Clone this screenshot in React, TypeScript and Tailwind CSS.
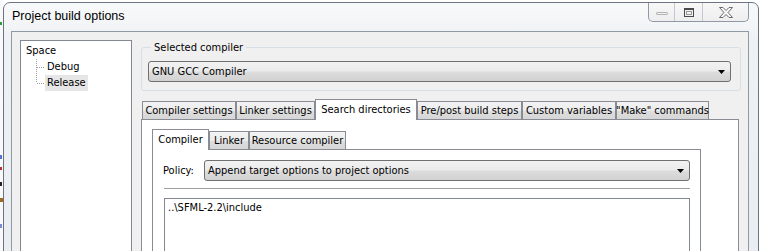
import React from 'react';

interface TabDef {
  label: string;
  width: string;
  active?: boolean;
}

const outerTabs: TabDef[] = [
  { label: 'Compiler settings', width: 'w-[94px]' },
  { label: 'Linker settings', width: 'w-[79px]' },
  { label: 'Search directories', width: 'w-[102px]', active: true },
  { label: 'Pre/post build steps', width: 'w-[105px]' },
  { label: 'Custom variables', width: 'w-[94px]' },
  { label: '"Make" commands', width: 'w-[93px]' },
];

const innerTabs: TabDef[] = [
  { label: 'Compiler', width: 'w-[57px]', active: true },
  { label: 'Linker', width: 'w-[40px]' },
  { label: 'Resource compiler', width: 'w-[97px]' },
];

// win7 style push-button gradient
const buttonBg =
  'bg-[linear-gradient(to_bottom,#f2f2f2_0%,#ebebeb_48%,#dddddd_52%,#d1d1d1_100%)]';

function Tab({ tab }: { tab: TabDef }) {
  if (tab.active) {
    return (
      <div
        className={`${tab.width} relative z-10 -mb-px flex h-[21px] items-start justify-center whitespace-nowrap border border-b-0 border-[#898c95] bg-white pt-[3px] leading-[13px]`}
      >
        {tab.label}
      </div>
    );
  }
  return (
    <div
      className={`${tab.width} flex h-[18px] items-center justify-center whitespace-nowrap border border-b-0 border-[#898c95] bg-[linear-gradient(to_bottom,#f3f3f3_0%,#ebebeb_50%,#dedede_51%,#d6d6d6_100%)] leading-[13px]`}
    >
      {tab.label}
    </div>
  );
}

function Combo({ text, className }: { text: string; className: string }) {
  return (
    <div
      className={`${className} ${buttonBg} flex h-[21px] items-center justify-between rounded-[3px] border border-[#707070] pl-[3px] pr-[5px] leading-[13px]`}
    >
      <span className="whitespace-nowrap">{text}</span>
      <svg width="7" height="4" viewBox="0 0 7 4">
        <path d="M0 0h7L3.5 4z" fill="#000" />
      </svg>
    </div>
  );
}

function TreeConnector({ last }: { last?: boolean }) {
  return (
    <svg width="10" height="16" viewBox="0 0 10 16" shapeRendering="crispEdges" className="shrink-0">
      <line
        x1="0.5"
        y1="0"
        x2="0.5"
        y2={last ? 8 : 16}
        stroke="#a0a0a0"
        strokeDasharray="1 1"
      />
      <line x1="1" y1="8.5" x2="9" y2="8.5" stroke="#a0a0a0" strokeDasharray="1 1" />
    </svg>
  );
}

function CaptionButtons() {
  return (
    <div className="mr-[9px] flex h-[19px] rounded-b-[5px] border border-t-0 border-[#8e99a5] bg-[linear-gradient(to_bottom,#f7f7f7,#eeeeee)]">
      <div className="flex w-[26px] items-center justify-center border-r border-[#c2c9d0]">
        <div className="mt-[3px] h-[3px] w-[12px] rounded-[1px] border border-[#b4b4b4]" />
      </div>
      <div className="flex w-[28px] items-center justify-center border-r border-[#c2c9d0]">
        <div className="h-[9px] w-[10px] border border-t-2 border-[#4a4a4a] p-[1px]">
          <div className="h-full w-full border border-[#9a9a9a]" />
        </div>
      </div>
      <div className="flex w-[45px] items-center justify-center">
        <svg width="14" height="11" viewBox="0 0 14 11">
          <path
            d="M0.5 0.5h3.5l3 3 3-3h3.5l-4.5 5 4.5 5h-3.5l-3-3-3 3h-3.5l4.5-5z"
            fill="#fafafa"
            stroke="#6a6a6a"
            strokeWidth="1"
            strokeLinejoin="round"
          />
        </svg>
      </div>
    </div>
  );
}

export default function App() {
  return (
    <div className="flex h-[251px] w-[761px] overflow-hidden bg-white font-['DejaVu_Sans_Condensed','Liberation_Sans',Arial,sans-serif] text-[11px] text-black">
      {/* bits of the window behind */}
      <div className="flex w-[3px] shrink-0 flex-col bg-[#f7f9fb]">
        <div className="mt-[22px] h-[3px] w-[2px] bg-[#2f9c3a]" />
        <div className="mt-[130px] h-[4px] w-[2px] bg-[#5a6fd0]" />
        <div className="mt-[8px] h-[3px] w-[2px] bg-[#c03030]" />
        <div className="mt-[12px] h-[4px] w-[2px] bg-[#222]" />
        <div className="mt-[12px] h-[4px] w-[3px] bg-[#a06a20]" />
        <div className="mt-[22px] h-[4px] w-[2px] bg-[#7a8ad8]" />
      </div>

      <div className="mt-[2px] flex h-[260px] w-[756px] shrink-0 flex-col rounded-t-[7px] border border-[#6b7580] bg-[linear-gradient(to_bottom,#f8f9fa,#eef1f4_40px,#e9edf1)]">
        {/* title bar */}
        <div className="flex h-[28px] shrink-0 items-start justify-between">
          <div className="pl-[8px] pt-[6px] font-['Liberation_Sans',Arial,sans-serif] text-[12.5px] leading-[14px] text-black">
            Project build options
          </div>
          <CaptionButtons />
        </div>

        {/* client area */}
        <div className="ml-[7px] mr-[9px] flex flex-1 border border-[#8f9aa5] bg-[#f0f0f0]">
          {/* tree */}
          <div className="ml-[8px] mt-[8px] w-[112px] shrink-0 border border-[#828790] bg-white pl-[5px] pt-[2px] leading-[16px]">
            <div className="h-[16px]">Space</div>
            <div className="flex h-[16px] pl-[10px]">
              <TreeConnector />
              <span className="pl-[1px]">Debug</span>
            </div>
            <div className="flex h-[16px] pl-[10px]">
              <TreeConnector last />
              <span className="-ml-[1px] bg-[#e6e6e6] px-[2px]">Release</span>
            </div>
          </div>

          {/* right side */}
          <div className="ml-[9px] flex w-[600px] shrink-0 flex-col">
            <fieldset className="mt-[7px] rounded-[3px] border border-[#d5dfe5] pb-[8px] pl-[6px] pr-[9px] pt-[6px]">
              <legend className="ml-[3px] px-[3px] pt-[2px] leading-[14px]">Selected compiler</legend>
              <Combo text="GNU GCC Compiler" className="w-full" />
            </fieldset>

            <div className="mt-[8px] flex h-[20px] items-end pl-[1px]">
              {outerTabs.map((t) => (
                <Tab key={t.label} tab={t} />
              ))}
            </div>
            <div className="w-[598px] flex-1 border border-[#898c95] bg-white pl-[10px] pt-[9px]">
              <div className="flex h-[20px] items-end">
                {innerTabs.map((t) => (
                  <Tab key={t.label} tab={t} />
                ))}
              </div>
              <div className="h-[200px] w-[549px] border border-[#898c95] bg-white px-[10px] pt-[10px]">
                <div className="flex items-center">
                  <span className="w-[41px] leading-[13px]">Policy:</span>
                  <Combo text="Append target options to project options" className="flex-1" />
                </div>
                <div className="ml-[1px] mt-[7px] h-px bg-[#a0a0a0]" />
                <div className="ml-[1px] mt-[9px] h-[80px] border border-[#828790] bg-white pl-[3px] pt-[2px] leading-[13px]">
                  ..\SFML-2.2\include
                </div>
              </div>
            </div>
          </div>
        </div>
      </div>
    </div>
  );
}
